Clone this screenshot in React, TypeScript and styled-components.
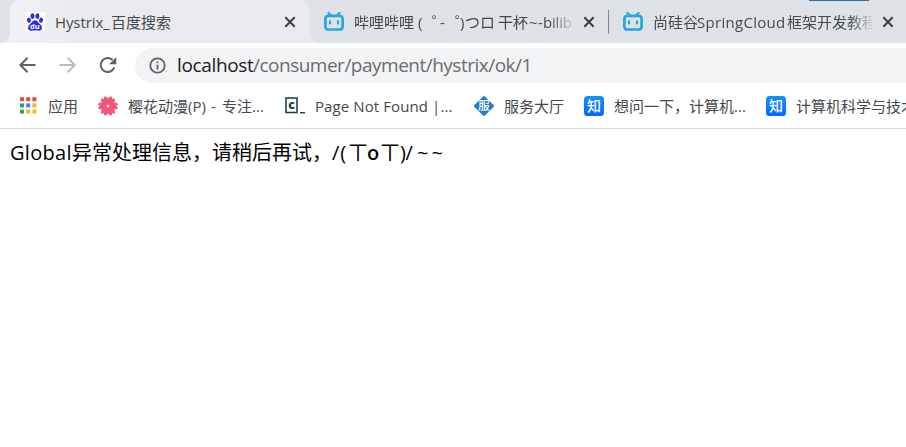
import React from "react";
import styled, { createGlobalStyle } from "styled-components";

const GlobalStyle = createGlobalStyle`
  * { box-sizing: border-box; }
  html, body { margin: 0; background: #fff; }
  body {
    overflow: hidden;
    font-family: "Open Sans", "Noto Sans CJK SC", sans-serif;
  }
`;

const Window = styled.div`
  width: 906px;
  height: 447px;
  overflow: hidden;
  background: #fff;
`;

const TabStrip = styled.div`
  position: relative;
  display: flex;
  height: 43px;
  padding-left: 10px;
  background: #dee1e6;
`;

const TopAccent = styled.div`
  position: absolute;
  left: 809px;
  top: 0;
  width: 60px;
  height: 1px;
  background: #2d6da8;
`;

const Tab = styled.div<{ $active?: boolean }>`
  position: relative;
  flex: none;
  display: flex;
  align-items: center;
  width: ${(p) => (p.$active ? 300 : 299)}px;
  height: 43px;
  padding-left: ${(p) => (p.$active ? 15 : 14)}px;
  border-radius: 10px 10px 0 0;
  background: ${(p) => (p.$active ? "linear-gradient(90deg, #f0f1f4, #e9eaee 25%)" : "transparent")};
  &::before, &::after {
    content: "";
    display: ${(p) => (p.$active ? "block" : "none")};
    position: absolute;
    bottom: 0;
    width: 10px;
    height: 10px;
  }
  &::before {
    left: -10px;
    background: radial-gradient(circle at 0 0, transparent 9.5px, #eff0f3 10px);
  }
  &::after {
    right: -10px;
    background: radial-gradient(circle at 100% 0, transparent 9.5px, #e9eaee 10px);
  }
`;

const TabDivider = styled.div`
  position: absolute;
  right: 0;
  top: 10px;
  width: 1px;
  height: 24px;
  background: #85898e;
`;

const TabIcon = styled.svg`
  flex: none;
  width: 20px;
  height: 20px;
`;

const TabTitle = styled.div<{ $fade?: boolean }>`
  width: 219px;
  margin-left: 10px;
  overflow: hidden;
  white-space: pre;
  font-size: 15px;
  line-height: 24px;
  color: #45494d;
  mask-image: ${(p) => (p.$fade ? "linear-gradient(90deg, #000 195px, transparent 222px)" : "none")};
`;

const CloseIcon = styled.svg`
  flex: none;
  width: 12px;
  height: 12px;
  margin-left: 10px;
`;

const Run = styled.span<{ $w?: number; $ls?: number; $color?: string; $weight?: number }>`
  display: inline-block;
  width: ${(p) => (p.$w ? `${p.$w}px` : "auto")};
  letter-spacing: ${(p) => p.$ls ?? 0}px;
  font-weight: ${(p) => p.$weight ?? "inherit"};
  color: ${(p) => p.$color ?? "inherit"};
  white-space: pre;
`;

const Toolbar = styled.div`
  display: flex;
  align-items: center;
  height: 44px;
  padding-left: 17px;
  background: #fff;
`;

const NavIcon = styled.svg`
  flex: none;
  width: 20px;
  height: 20px;
  margin-right: 20px;
`;

const AddressBar = styled.div`
  display: flex;
  flex: 1;
  align-items: center;
  height: 35px;
  margin-left: -2px;
  padding-left: 14px;
  border-radius: 18px 0 0 18px;
  background: #f1f3f4;
`;

const InfoIcon = styled.svg`
  width: 17px;
  height: 17px;
  flex: none;
`;

const Url = styled.div`
  margin-left: 11px;
  font-size: 19px;
  line-height: 30px;
  white-space: nowrap;
  color: #696d71;
`;

const Bookmarks = styled.div`
  display: flex;
  align-items: center;
  height: 42px;
  padding-left: 18px;
  border-bottom: 1px solid #d9dbdd;
  overflow: hidden;
`;

const Bookmark = styled.div<{ $w: number }>`
  flex: none;
  display: flex;
  align-items: center;
  width: ${(p) => p.$w}px;
  height: 38px;
  margin-top: -3px;
`;

const BookmarkIcon = styled.svg`
  flex: none;
  width: 20px;
  height: 20px;
`;

const BookmarkLabel = styled.div`
  margin-left: 10px;
  padding-bottom: 1px;
  font-size: 15px;
  line-height: 24px;
  white-space: pre;
  color: #45494d;
`;

const Page = styled.main`
  padding: 9px 10px;
  font-size: 20px;
  line-height: 30px;
  white-space: nowrap;
  color: #000;
`;

const Close = () => (
  <CloseIcon viewBox="0 0 12 12">
    <path d="M1.3 1.3 10.7 10.7M10.7 1.3 1.3 10.7" stroke="#3c4043" strokeWidth="2" />
  </CloseIcon>
);

const Baidu = () => (
  <TabIcon viewBox="0 0 20 20">
    <rect width="20" height="20" rx="2" fill="#fff" />
    <g fill="#2b32dc">
      <ellipse cx="3.9" cy="8.2" rx="2" ry="2.6" transform="rotate(-12 3.9 8.2)" />
      <ellipse cx="7.5" cy="4.1" rx="2" ry="2.8" />
      <ellipse cx="12.4" cy="4.1" rx="2" ry="2.8" transform="rotate(8 12.4 4.1)" />
      <ellipse cx="16.1" cy="8.2" rx="2" ry="2.6" transform="rotate(12 16.1 8.2)" />
      <path d="M10 8.2c2 0 2.8 1.6 4 3 1.4 1.5 3.1 2.4 3 4.7-.1 2.1-1.8 2.9-3.5 2.7-2.4-.3-4.6-.3-7 0-1.8.2-3.4-.7-3.5-2.8-.1-2.2 1.6-3.1 3-4.6 1.2-1.4 2-3 4-3z" />
    </g>
    <text x="9.8" y="17.2" textAnchor="middle" fontFamily="Open Sans" fontWeight="700" fontSize="7.5" fill="#fff">du</text>
  </TabIcon>
);

const Bilibili = () => (
  <TabIcon viewBox="0 0 20 20" fill="none" stroke="#23a9dc" strokeLinecap="round">
    <path d="M4.4 1 7 3.4M15.6 1 13 3.4" strokeWidth="2.2" />
    <rect x="1.4" y="3.9" width="17.2" height="13.6" rx="2.8" strokeWidth="2.7" />
    <path d="M6 9.4v2M14 9.4v2" strokeWidth="2.2" />
  </TabIcon>
);

const APP_COLORS = ["#dd4b3e", "#dd4b3e", "#dd4b3e", "#27a567", "#4285f4", "#f4b51e", "#27a567", "#f4b51e", "#f4b51e"];

const Apps = () => (
  <BookmarkIcon viewBox="0 0 20 20">
    {APP_COLORS.map((c, i) => (
      <rect key={i} x={2 + (i % 3) * 6.2} y={1.2 + Math.floor(i / 3) * 6.2} width="4" height="4" fill={c} />
    ))}
  </BookmarkIcon>
);

const Sakura = () => (
  <BookmarkIcon viewBox="0 0 20 20">
    {[0, 60, 120, 180, 240, 300].map((angle) => (
      <path
        key={angle}
        d="M10 10.5C7.6 8.5 6 5.5 6.5 2.6 6.8 1 7.7.2 8.8 0L10 2.1 11.2 0C12.3.2 13.2 1 13.5 2.6 14 5.5 12.4 8.5 10 10.5Z"
        fill="#ed5779"
        transform={`rotate(${angle + 30} 10 10)`}
      />
    ))}
    <path d="M10 7.5v5M7.5 10h5" stroke="#f58ca3" strokeWidth=".6" />
    <circle cx="10" cy="10" r="1.1" fill="#fff" />
  </BookmarkIcon>
);

const Csdn = () => (
  <BookmarkIcon viewBox="0 0 20 20">
    <rect x="1" y="2" width="11" height="14.5" fill="#fff" stroke="#24414f" strokeWidth="1.6" />
    <text x="6.6" y="13.2" textAnchor="middle" fontFamily="Open Sans" fontWeight="800" fontSize="12" fill="#24414f">c</text>
    <path d="M15 16.7h5" stroke="#24414f" strokeWidth="1.4" />
  </BookmarkIcon>
);

const Service = () => (
  <BookmarkIcon viewBox="0 0 20 20">
    <path d="M10 1.4 18.6 10 10 18.6 1.4 10Z" fill="#217cca" stroke="#217cca" strokeWidth="2.6" strokeLinejoin="round" />
    <text x="10" y="14.2" textAnchor="middle" fontFamily="Noto Sans CJK SC" fontWeight="500" fontSize="11.5" fill="#fff">服</text>
  </BookmarkIcon>
);

const Zhihu = () => (
  <BookmarkIcon viewBox="0 0 20 20">
    <defs>
      <linearGradient id="zhihuBlue" x1="0" y1="0" x2="0" y2="1">
        <stop offset="0" stopColor="#1294f7" />
        <stop offset="1" stopColor="#0766ff" />
      </linearGradient>
    </defs>
    <rect width="20" height="20" rx="3.6" fill="url(#zhihuBlue)" />
    <text x="10" y="15.2" textAnchor="middle" fontFamily="Noto Sans CJK SC" fontWeight="500" fontSize="14" fill="#fff">知</text>
  </BookmarkIcon>
);

export default function App() {
  return (
    <Window>
      <GlobalStyle />
      <TabStrip>
        <TopAccent />
        <Tab $active>
          <Baidu />
          <TabTitle><Run $w={56} $ls={-0.1}>Hystrix_</Run>百度搜索</TabTitle>
          <Close />
        </Tab>
        <Tab>
          <Bilibili />
          <TabTitle $fade>
            <Run $w={64}>哔哩哔哩</Run><Run $w={14}>(</Run><Run $w={8}>゜</Run><Run $w={15}>-</Run><Run $w={5}>゜</Run><Run $w={5}>)</Run><Run $w={33}>つロ</Run><Run $w={31}>干杯</Run><Run $w={9}>~</Run><Run $w={5}>-</Run><Run $ls={-0.2}>bilibili</Run>
          </TabTitle>
          <Close />
          <TabDivider />
        </Tab>
        <Tab>
          <Bilibili />
          <TabTitle $fade><Run $w={44}>尚硅谷</Run><Run $w={90} $ls={0.3}>SpringCloud</Run>框架开发教程</TabTitle>
          <Close />
        </Tab>
      </TabStrip>
      <Toolbar>
        <NavIcon viewBox="0 0 20 20" fill="none" stroke="#5f6368" strokeWidth="2">
          <path d="M18.5 10H4M10.6 2.8 3.4 10l7.2 7.2" />
        </NavIcon>
        <NavIcon viewBox="0 0 20 20" fill="none" stroke="#babcbe" strokeWidth="2">
          <path d="M2.5 10H17M10.5 2.8 17.7 10l-7.2 7.2" />
        </NavIcon>
        <NavIcon viewBox="0 0 20 20">
          <path d="M17.3 12.4A7 7 0 1 1 15.6 5" fill="none" stroke="#5f6368" strokeWidth="2" />
          <path d="M19.3 2v7.2h-7.2Z" fill="#5f6368" />
        </NavIcon>
        <AddressBar>
          <InfoIcon viewBox="0 0 17 17" fill="none" stroke="#5f6368">
            <circle cx="8.5" cy="8.5" r="7.2" strokeWidth="1.8" />
            <path d="M8.5 7.7v4.7M8.5 4.5v1.8" strokeWidth="1.8" />
          </InfoIcon>
          <Url><Run $w={76} $color="#202124" $ls={-0.35}>localhost</Run><Run $ls={-0.5}>/consumer/payment/hystrix/ok/1</Run></Url>
        </AddressBar>
      </Toolbar>
      <Bookmarks>
        <Bookmark $w={80}><Apps /><BookmarkLabel>应用</BookmarkLabel></Bookmark>
        <Bookmark $w={187}>
          <Sakura />
          <BookmarkLabel>樱花动漫<Run $w={19}>(P)</Run><Run $w={15}> - </Run>专注...</BookmarkLabel>
        </Bookmark>
        <Bookmark $w={189}><Csdn /><BookmarkLabel><Run $ls={0.1}>Page Not Found |...</Run></BookmarkLabel></Bookmark>
        <Bookmark $w={110}><Service /><BookmarkLabel>服务大厅</BookmarkLabel></Bookmark>
        <Bookmark $w={182}><Zhihu /><BookmarkLabel>想问一下，计算机...</BookmarkLabel></Bookmark>
        <Bookmark $w={150}><Zhihu /><BookmarkLabel>计算机科学与技术</BookmarkLabel></Bookmark>
      </Bookmarks>
      <Page>
        <Run $w={62} $ls={0.3}>Global</Run>异常处理信息，请稍后再试，<Run $w={16} $ls={1}>/(</Run><Run $w={19}>ㄒ</Run><Run $w={13} $weight={600}>o</Run><Run $w={20}>ㄒ</Run><Run $w={17} $ls={-0.5}>)/</Run><Run $ls={3}>~~</Run>
      </Page>
    </Window>
  );
}
